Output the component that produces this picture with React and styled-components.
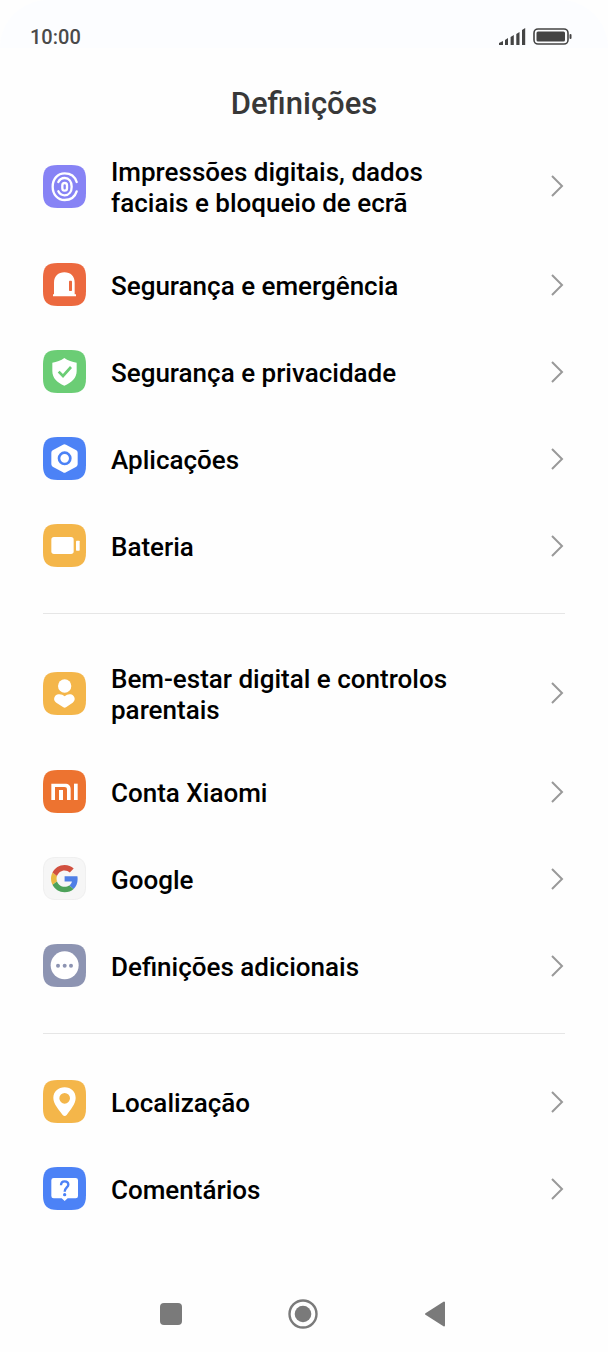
import React from 'react';
import styled, { createGlobalStyle } from 'styled-components';

const GlobalStyle = createGlobalStyle`
  * {
    box-sizing: border-box;
  }

  body {
    margin: 0;
    background: #fefefe;
    font-family: Roboto, 'Liberation Sans', sans-serif;
  }
`;

const Screen = styled.div`
  display: flex;
  flex-direction: column;
  min-height: 100vh;
`;

const StatusBar = styled.header`
  display: flex;
  align-items: center;
  justify-content: space-between;
  height: 48px;
  padding: 26px 36px 0 30px;
  background: #fcfdff;
  border-radius: 48px 48px 0 0;
`;

const Clock = styled.time`
  font-size: 20px;
  line-height: 24px;
  font-weight: 500;
  color: #4a4a4a;
`;

const StatusIcons = styled.div`
  display: flex;
  align-items: center;
  gap: 7px;

  svg {
    display: block;
  }
`;

const Title = styled.h1`
  margin: 36px 0 7px;
  font-size: 31px;
  line-height: 40px;
  font-weight: 500;
  text-align: center;
  color: #383838;
`;

const Section = styled.ul`
  list-style: none;
  margin: 0;
  padding: 0;

  & + & {
    margin: 24px 43px 0;
    padding-top: 24px;
    border-top: 1px solid #e6e6e6;
  }

  & + & > li {
    margin: 0 -43px;
  }
`;

const Row = styled.a`
  display: flex;
  align-items: center;
  gap: 25px;
  padding: 22px 43px;
  color: #000;
  text-decoration: none;

  svg {
    display: block;
    flex-shrink: 0;
  }
`;

const Label = styled.span`
  flex: 1;
  max-width: 360px;
  padding-top: 4px;
  font-size: 26px;
  line-height: 31px;
  font-weight: 500;
`;

const ChevronIcon = styled.svg`
  margin-left: auto;
`;

const NavBar = styled.nav`
  display: flex;
  justify-content: center;
  gap: 88px;
  margin-top: auto;
  padding: 16px 2px 16px 0;
`;

const NavButton = styled.button`
  display: flex;
  align-items: center;
  justify-content: center;
  width: 44px;
  height: 44px;
  padding: 0;
  border: none;
  background: none;
  color: #7a7a7a;
`;

const Tile = ({ color, stroke, children }) => (
  <svg width="43" height="43" viewBox="0 0 129 129" aria-hidden="true">
    <path
      d="M0 44C0 12 12 0 44 0H85C117 0 129 12 129 44V85C129 117 117 129 85 129H44C12 129 0 117 0 85Z"
      fill={color}
    />
    {stroke && (
      <path
        d="M1 44C1 13 13 1 44 1H85C116 1 128 13 128 44V85C128 116 116 128 85 128H44C13 128 1 116 1 85Z"
        fill="none"
        stroke={stroke}
        strokeWidth="2"
      />
    )}
    {children}
  </svg>
);

const FingerprintIcon = () => (
  <Tile color="#8783f5">
    <g fill="none" stroke="#fff" strokeWidth="7" strokeLinecap="round">
      <path d="M101 51C96 35 82 25 65 25C44 25 29 42 29 65C29 88 44 105 65 105C82 105 96 95 101 79" />
      <path d="M46 51C50 43 57 39 65 39C78 39 86 50 86 65C86 80 78 91 65 91C57 91 50 87 46 79" />
      <rect x="58" y="54" width="14" height="23" rx="7" />
    </g>
  </Tile>
);

const SirenIcon = () => (
  <Tile color="#ec693f">
    <path d="M33 94V59C33 40 46 28 64 28C83 28 95 40 95 59V94H99V100H30V94Z" fill="#fff" />
    <rect x="78" y="53" width="9" height="31" rx="2" fill="#ec693f" />
  </Tile>
);

const ShieldIcon = () => (
  <Tile color="#6bcd75">
    <path
      d="M64 24C74 32 88 36 101 38V63C101 84 86 98 64 107C42 98 28 84 28 63V38C41 36 54 32 64 24Z"
      fill="#fff"
    />
    <path d="M47 65L60 78L84 51" fill="none" stroke="#6bcd75" strokeWidth="8" />
  </Tile>
);

const AppsIcon = () => (
  <Tile color="#4c82f6">
    <path
      d="M60 23Q64 20 69 23L100 40Q104 42 104 47V82Q104 86 100 89L69 106Q64 109 60 106L29 89Q25 86 25 82V47Q25 42 29 40Z"
      fill="#fff"
    />
    <circle cx="65" cy="64" r="17" fill="none" stroke="#4c82f6" strokeWidth="8" />
  </Tile>
);

const BatteryIcon = () => (
  <Tile color="#f4b64a">
    <rect x="25" y="39" width="67" height="51" rx="8" fill="#fff" />
    <rect x="99" y="50" width="11" height="30" rx="2" fill="#fff" />
  </Tile>
);

const WellbeingIcon = () => (
  <Tile color="#f4b64a">
    <circle cx="65" cy="42" r="20" fill="#fff" />
    <path
      d="M65 73C73 65 85 65 91 71C98 79 95 87 89 92L69 106Q65 108 61 106L40 92C33 87 31 79 37 71C44 65 57 65 65 73Z"
      fill="#fff"
    />
  </Tile>
);

const XiaomiIcon = () => (
  <Tile color="#ed7330">
    <path d="M25 41H65C78 41 83 47 83 58V90H72V60C72 53 70 51 64 51H36V90H25Z" fill="#fff" />
    <rect x="48" y="60" width="12" height="30" fill="#fff" />
    <rect x="93" y="41" width="11" height="49" fill="#fff" />
  </Tile>
);

const GoogleIcon = () => (
  <Tile color="#f6f6f6" stroke="#ececec">
    <g transform="translate(24 24) scale(1.7)">
      <path
        fill="#4f7fe6"
        d="M46.98 24.55c0-1.57-.15-3.09-.38-4.55H24v9.02h12.94c-.58 2.96-2.26 5.48-4.78 7.18l7.73 6c4.51-4.18 7.09-10.36 7.09-17.65z"
      />
      <path
        fill="#4da25a"
        d="M24 48c6.48 0 11.93-2.13 15.89-5.81l-7.73-6c-2.15 1.45-4.92 2.3-8.16 2.3-6.26 0-11.57-4.22-13.47-9.91l-7.98 6.19C6.51 42.62 14.62 48 24 48z"
      />
      <path
        fill="#eab941"
        d="M10.53 28.59c-.48-1.45-.76-2.99-.76-4.59s.27-3.14.76-4.59l-7.98-6.19C.92 16.46 0 20.12 0 24c0 3.88.92 7.54 2.56 10.78l7.97-6.19z"
      />
      <path
        fill="#d1503f"
        d="M24 9.5c3.54 0 6.71 1.22 9.21 3.6l6.85-6.85C35.9 2.38 30.47 0 24 0 14.62 0 6.51 5.38 2.56 13.22l7.98 6.19C12.43 13.72 17.74 9.5 24 9.5z"
      />
    </g>
  </Tile>
);

const MoreIcon = () => (
  <Tile color="#8d94b2">
    <circle cx="65" cy="64" r="42" fill="#fff" />
    <g fill="#8d94b2">
      <circle cx="45" cy="65" r="6" />
      <circle cx="65" cy="65" r="6" />
      <circle cx="84" cy="65" r="6" />
    </g>
  </Tile>
);

const PinIcon = () => (
  <Tile color="#f4b64a">
    <path
      fillRule="evenodd"
      d="M65 22C84 22 98 35 98 54C98 73 82 89 71 105Q65 111 59 105C48 89 31 73 31 54C31 35 46 22 65 22ZM65 39A16 16 0 1 0 65 71A16 16 0 1 0 65 39Z"
      fill="#fff"
    />
  </Tile>
);

const FeedbackIcon = () => (
  <Tile color="#4c82f6">
    <path
      d="M32 33H98Q105 33 105 40V87Q105 94 98 94H74L65 102L56 94H32Q25 94 25 87V40Q25 33 32 33Z"
      fill="#fff"
    />
    <path
      d="M54 55C54 47 58 43 65 43C72 43 76 47 76 53C76 61 65 62 65 74"
      fill="none"
      stroke="#4c82f6"
      strokeWidth="7"
    />
    <circle cx="65" cy="83" r="5" fill="#4c82f6" />
  </Tile>
);

const Chevron = () => (
  <ChevronIcon width="16" height="24" viewBox="0 0 16 24" aria-hidden="true">
    <path d="M3 2L13 12L3 22" fill="none" stroke="#999" strokeWidth="2" />
  </ChevronIcon>
);

const sections = [
  [
    { label: 'Impressões digitais, dados faciais e bloqueio de ecrã', icon: FingerprintIcon },
    { label: 'Segurança e emergência', icon: SirenIcon },
    { label: 'Segurança e privacidade', icon: ShieldIcon },
    { label: 'Aplicações', icon: AppsIcon },
    { label: 'Bateria', icon: BatteryIcon },
  ],
  [
    { label: 'Bem-estar digital e controlos parentais', icon: WellbeingIcon },
    { label: 'Conta Xiaomi', icon: XiaomiIcon },
    { label: 'Google', icon: GoogleIcon },
    { label: 'Definições adicionais', icon: MoreIcon },
  ],
  [
    { label: 'Localização', icon: PinIcon },
    { label: 'Comentários', icon: FeedbackIcon },
  ],
];

function App() {
  return (
    <Screen>
      <GlobalStyle />
      <StatusBar>
        <Clock>10:00</Clock>
        <StatusIcons>
          <svg width="27" height="18" viewBox="0 0 27 18" fill="#444" aria-hidden="true">
            <path d="M0 15L4 13V17H0ZM6 12L9 10V17H6ZM11.6 9L14.8 7V17H11.6ZM17.3 6L20.5 4V17H17.3ZM23 2L26.2 0V17H23Z" />
          </svg>
          <svg width="39" height="18" viewBox="0 0 39 18" aria-hidden="true">
            <rect x="1" y="1" width="34" height="15" rx="4" fill="none" stroke="#444" strokeWidth="1.6" />
            <rect x="3.5" y="3.5" width="28.5" height="10" rx="1.5" fill="#444" />
            <rect x="36.5" y="6" width="2" height="5" rx="1" fill="#444" />
          </svg>
        </StatusIcons>
      </StatusBar>
      <Title>Definições</Title>
      <main>
        {sections.map((items) => (
          <Section key={items[0].label}>
            {items.map(({ label, icon: Icon }) => (
              <li key={label}>
                <Row href="#">
                  <Icon />
                  <Label>{label}</Label>
                  <Chevron />
                </Row>
              </li>
            ))}
          </Section>
        ))}
      </main>
      <NavBar>
        <NavButton aria-label="Recentes">
          <svg width="22" height="22" viewBox="0 0 22 22">
            <rect width="22" height="22" rx="4" fill="currentColor" />
          </svg>
        </NavButton>
        <NavButton aria-label="Início">
          <svg width="30" height="30" viewBox="0 0 30 30">
            <circle cx="15" cy="15" r="13.5" fill="none" stroke="currentColor" strokeWidth="2.4" />
            <circle cx="15" cy="15" r="8.3" fill="currentColor" />
          </svg>
        </NavButton>
        <NavButton aria-label="Voltar">
          <svg width="22" height="26" viewBox="0 0 22 26">
            <path
              d="M20 1.5V24.5L2 13Z"
              fill="currentColor"
              stroke="currentColor"
              strokeWidth="2"
              strokeLinejoin="round"
            />
          </svg>
        </NavButton>
      </NavBar>
    </Screen>
  );
}

export default App;
